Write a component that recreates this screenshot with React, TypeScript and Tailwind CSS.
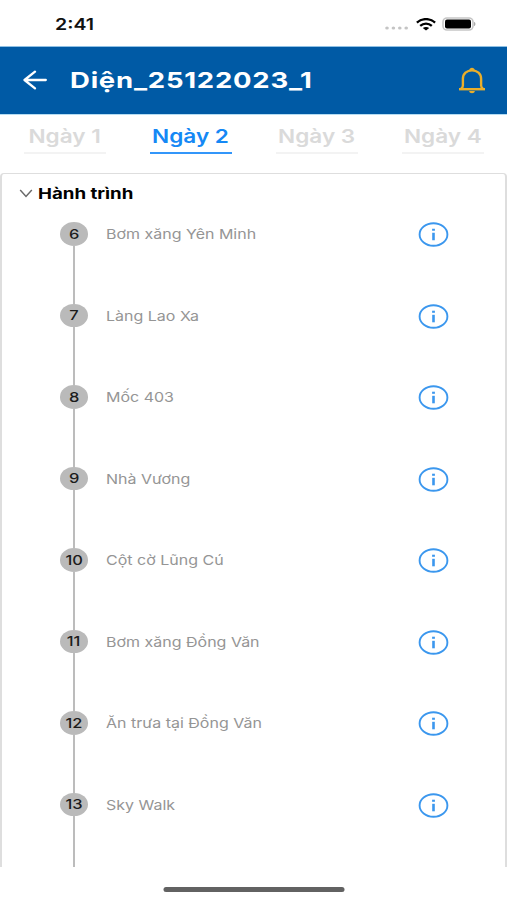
import React from "react";

const stops = [
  { id: 6, name: "Bơm xăng Yên Minh" },
  { id: 7, name: "Làng Lao Xa" },
  { id: 8, name: "Mốc 403" },
  { id: 9, name: "Nhà Vương" },
  { id: 10, name: "Cột cờ Lũng Cú" },
  { id: 11, name: "Bơm xăng Đồng Văn" },
  { id: 12, name: "Ăn trưa tại Đồng Văn" },
  { id: 13, name: "Sky Walk" },
];

const days = ["Ngày 1", "Ngày 2", "Ngày 3", "Ngày 4"];

function StatusBar() {
  return (
    <div className="flex h-[46px] shrink-0 items-center pt-[2px] pr-[31px] pl-[55px]">
      <span className="origin-left scale-x-[1.22] text-[16px] leading-none font-semibold text-[#111]">2:41</span>
      <div className="ml-auto flex items-center">
        <svg className="mt-[7px]" width="24" height="4" viewBox="0 0 24 4" fill="#c4c4c4">
          <ellipse cx="2" cy="2" rx="1.8" ry="1.6" />
          <ellipse cx="8.4" cy="2" rx="1.8" ry="1.6" />
          <ellipse cx="14.8" cy="2" rx="1.8" ry="1.6" />
          <ellipse cx="21.2" cy="2" rx="1.8" ry="1.6" />
        </svg>
        <svg className="ml-[7px]" width="20" height="13" viewBox="0 0 20 13" fill="none" stroke="#000" strokeWidth="2.3">
          <path d="M0.9 4.6C6 -0.1 14 -0.1 19.1 4.6" />
          <path d="M4.2 7.9C7.5 4.9 12.5 4.9 15.8 7.9" />
          <path d="M10 12.6L6.8 10C8.6 8.5 11.4 8.5 13.2 10Z" fill="#000" stroke="none" />
        </svg>
        <svg className="ml-[6px]" width="34" height="14" viewBox="0 0 34 14">
          <rect x="1" y="1" width="30" height="12" rx="4" fill="#fff" stroke="#c6c6c6" strokeWidth="1.6" />
          <rect x="3" y="2.6" width="26" height="8.8" rx="2" fill="#000" />
          <path d="M32 4.8C34 5.8 34 8.2 32 9.2Z" fill="#aaa" />
        </svg>
      </div>
    </div>
  );
}

function Header() {
  return (
    <header className="flex h-[69px] shrink-0 items-center border-t border-b border-t-[#8fc0e4] border-b-[#b5dcf2] bg-[#005aa5] pr-[21px] pl-[23px]">
      <svg className="mb-px" width="25" height="20" viewBox="0 0 25 20" fill="none" stroke="#fff" strokeWidth="2.3" strokeLinecap="round" strokeLinejoin="round">
        <path d="M22.8 10H1.8M12 1.6L1.5 10L12 18.4" />
      </svg>
      <h1 className="mb-px ml-[22px] origin-left scale-x-[1.25] text-[22px] leading-none font-bold tracking-[0.62px] text-white">Diện_25122023_1</h1>
      <svg className="ml-auto" width="28" height="27" viewBox="0 0 28 27" fill="none" stroke="#e9ae2b" strokeWidth="2.4">
        <path d="M1 22.2H27" />
        <path d="M3 21.6C4.6 20.8 4.9 20 4.9 18.5V11.8C4.9 6.8 8.8 3.4 14 3.4S23.1 6.8 23.1 11.8V18.5C23.1 20 23.4 20.8 25 21.6" />
        <path d="M11.2 3.2C11.2 -0.2 16.8 -0.2 16.8 3.2Z" fill="#e9ae2b" stroke="none" />
        <path d="M11.2 24H16.8C16.8 27 11.2 27 11.2 24Z" fill="#e9ae2b" stroke="none" />
      </svg>
    </header>
  );
}

function Tabs() {
  return (
    <nav className="flex h-[58px] shrink-0 gap-[44px] pt-[9px] pl-[24px]">
      {days.map((day, i) => (
        <div
          key={day}
          className={
            i === 1
              ? "flex h-[30px] w-[82px] shrink-0 justify-center border-b-2 border-[#3296fa] text-[#1588f5]"
              : "flex h-[30px] w-[82px] shrink-0 justify-center border-b-2 border-[#f3f3f3] text-[#dadada]"
          }
        >
          <span className="scale-x-[1.22] text-[18.5px] leading-[24px] font-semibold whitespace-nowrap">{day}</span>
        </div>
      ))}
    </nav>
  );
}

function InfoIcon() {
  return (
    <svg className="mr-[56px] ml-auto shrink-0" width="31" height="26" viewBox="0 0 31 26" fill="none" stroke="#3b97ee">
      <ellipse cx="15.5" cy="12.5" rx="13.9" ry="11.3" strokeWidth="1.9" />
      <path d="M15.5 10.8V18.3" strokeWidth="2.6" />
      <path d="M15.5 6.7V8.8" strokeWidth="2.8" />
    </svg>
  );
}

export default function App() {
  return (
    <div className="flex h-[900px] w-[507px] flex-col overflow-hidden bg-white font-['Inter','Liberation_Sans',sans-serif]">
      <StatusBar />
      <Header />
      <Tabs />
      <section className="flex h-[694px] shrink-0 flex-col overflow-hidden rounded-t-[4px] border-t-[1.5px] border-r-2 border-l-2 border-[#dedede]">
        <div className="flex h-[39px] shrink-0 items-center pl-[17px]">
          <svg width="14" height="9" viewBox="0 0 14 9" fill="none" stroke="#6a6a6a" strokeWidth="1.5">
            <path d="M1.2 1L7 7.4L12.8 1" />
          </svg>
          <h2 className="mb-px ml-[5px] origin-left scale-x-[1.245] text-[15px] leading-none font-bold text-black">Hành trình</h2>
        </div>
        <ol className="flex flex-col pt-[9px]">
          {stops.map((stop) => (
            <li key={stop.id} className="flex h-[81.57px] shrink-0 items-start">
              <div className="ml-[58px] flex h-full w-[28px] shrink-0 flex-col items-center">
                <div className="flex h-[23.5px] w-[28px] shrink-0 items-center justify-center rounded-[50%] bg-[#bababa] pt-px">
                  <span className="scale-x-[1.22] text-[13.5px] leading-none font-medium text-[#1c1c1c]">{stop.id}</span>
                </div>
                <div className="w-[2.5px] grow bg-[#bcbcbc]" />
              </div>
              <span className="ml-[18px] origin-left scale-x-[1.185] text-[13.5px] leading-[24px] whitespace-nowrap text-[#959595]">{stop.name}</span>
              <InfoIcon />
            </li>
          ))}
        </ol>
      </section>
      <footer className="flex grow items-start justify-center pt-[20px]">
        <div className="h-[5px] w-[181px] translate-x-[0.5px] rounded-full bg-[#626262]" />
      </footer>
    </div>
  );
}
